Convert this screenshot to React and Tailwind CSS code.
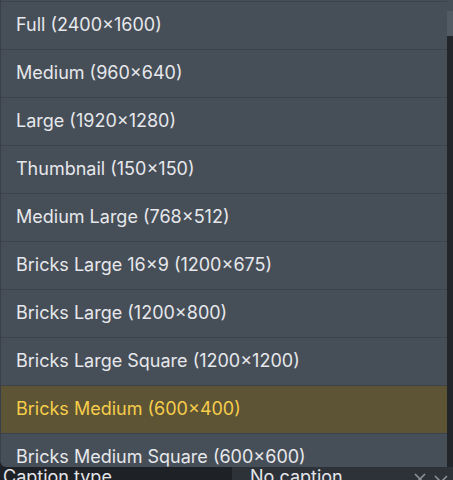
import React from "react";

const sizes = [
  "Full (2400×1600)",
  "Medium (960×640)",
  "Large (1920×1280)",
  "Thumbnail (150×150)",
  "Medium Large (768×512)",
  "Bricks Large 16×9 (1200×675)",
  "Bricks Large (1200×800)",
  "Bricks Large Square (1200×1200)",
  "Bricks Medium (600×400)",
  "Bricks Medium Square (600×600)",
];

const selected = "Bricks Medium (600×400)";

export default function App() {
  return (
    <div
      className="relative h-[480px] w-[453px] overflow-hidden bg-[#1e2125]"
      style={{ fontFamily: "Inter, 'Liberation Sans', sans-serif" }}
    >
      {/* caption row underneath the open dropdown */}
      <div className="absolute left-0 right-0 top-[467px] flex h-[30px] text-[18px] leading-[18px] text-[#e4e6ea]">
        <div className="flex w-[232px] items-start pl-[3px] pt-[1px]">Caption type</div>
        <div className="flex flex-1 items-start justify-between bg-[#2d3239] pl-[18px] pr-[4px] pt-[1px]">
          <span>No caption</span>
          <span className="flex gap-[6px] pt-[4px] text-[#8b9199]">
            <svg width="14" height="14" viewBox="0 0 14 14" fill="none" stroke="currentColor" strokeWidth="1.6">
              <path d="M2 2l10 10M12 2L2 12" />
            </svg>
            <svg width="16" height="14" viewBox="0 0 16 14" fill="none" stroke="currentColor" strokeWidth="1.6">
              <path d="M2 4l6 6 6-6" />
            </svg>
          </span>
        </div>
      </div>

      {/* dropdown */}
      <div className="absolute left-0 top-0 flex h-[467px] w-[453px]">
        <div className="flex-1 overflow-hidden rounded-bl-[6px] border-l border-[#3a4048] bg-[#464e58] pt-[1px]">
          <ul className="border-t border-[#3c434c]">
            {sizes.map((s) => (
              <li
                key={s}
                className={`flex h-[48px] items-center border-b border-[#3c434c] pb-[2px] pl-[15px] text-[18px] ${
                  s === selected ? "bg-[#5d5436] text-[#f6cd4a]" : "text-[#e6e8eb]"
                }`}
              >
                {s}
              </li>
            ))}
          </ul>
        </div>
        <div className="flex w-[6px] flex-col bg-[#464e58]">
          <div className="h-[11px]" />
          <div className="h-[25px] bg-[#525a64]" />
          <div className="flex-1 bg-[#22262b]" />
        </div>
      </div>
    </div>
  );
}
